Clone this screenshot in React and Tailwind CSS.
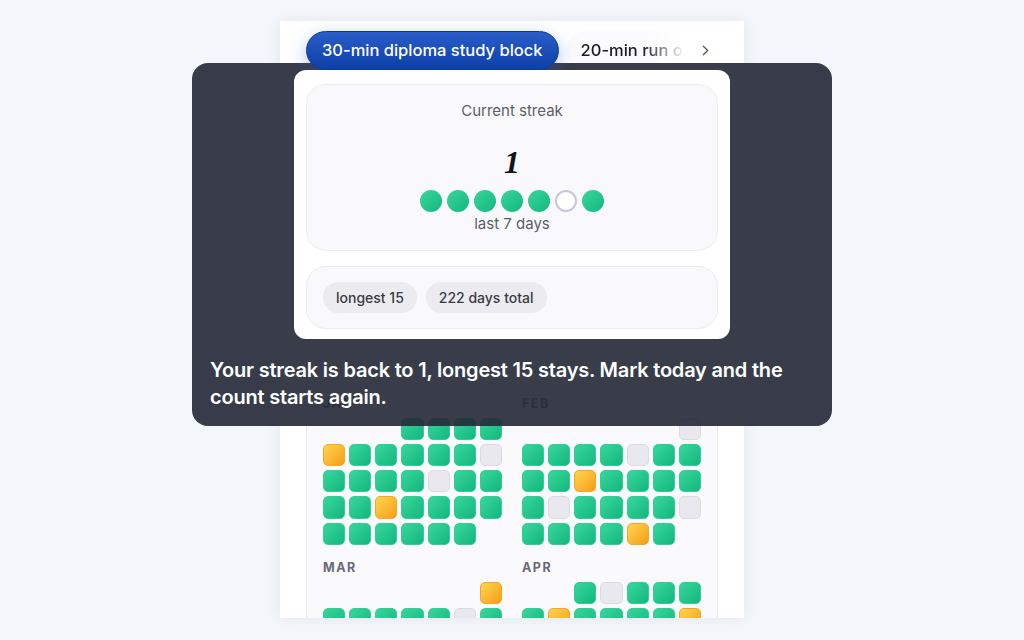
import React from "react";
import { ChevronRight } from "lucide-react";

const months = [
  { name: "JAN", rows: ["xxxGGGG", "OGGGGGE", "GGGGEGG", "GGOGGGG", "GGGGGG"] },
  { name: "FEB", rows: ["xxxxxxE", "GGGGEGG", "GGOGGGG", "GEGGGGE", "GGGGOG"] },
  { name: "MAR", rows: ["xxxxxxO", "GGGGGEG", "GGGGGGG", "GGOGGGG", "GGGGGGG", "GG"] },
  { name: "APR", rows: ["xxGEGGG", "GOGGGGO", "GGGGGGG", "GGEGGGG", "GGGG"] },
];

const week = ["G", "G", "G", "G", "G", "E", "G"];

const cellClass = {
  G: "bg-linear-to-br from-[#36d69c] to-[#10b77e] border border-[#2fd095]",
  O: "bg-linear-to-br from-[#fdd54f] to-[#f59e0b] border border-[#f5a623]",
  E: "bg-[#e9e8ee] border border-[#dcdbe4]",
  x: "",
};

const Month = ({ month }) => (
  <div>
    <p className="text-[12.5px] font-bold tracking-[0.12em] text-[#6a6977] leading-[14px] mb-[7px]">
      {month.name}
    </p>
    <div className="grid grid-cols-7 gap-[4px]">
      {month.rows.flatMap((row, r) =>
        row.split("").map((c, i) => (
          <div key={r + "-" + i} className={`aspect-square rounded-[5px] ${cellClass[c]}`} />
        ))
      )}
    </div>
  </div>
);

const App = () => {
  return (
    <div className="relative h-[640px] w-full overflow-hidden bg-[#f3f6fa] font-['Inter',sans-serif]">
      {/* phone column */}
      <div className="mx-auto mt-[21px] h-[597px] w-[464px] overflow-hidden bg-white px-[26px] shadow-[0_0_14px_rgba(20,30,60,0.07)]">
        {/* tabs */}
        <div className="flex items-center gap-[7px] pt-[10px]">
          <div className="relative z-30 flex h-[39px] shrink-0 items-center rounded-full border border-[#0b3a9e] bg-linear-to-b from-[#2a5dc8] to-[#0d3fa8] px-[15px] text-[16.5px] font-medium text-white shadow-[0_6px_18px_rgba(37,84,200,0.35)]">
            30-min diploma study block
          </div>
          <div className="flex h-[39px] w-[124px] shrink-0 items-center overflow-hidden rounded-full bg-[#fbfbfd] pl-[15px] text-[16.5px] font-medium whitespace-nowrap text-[#1c1c24] [mask-image:linear-gradient(to_right,black_62%,transparent_96%)]">
            20-min run or walk
          </div>
          <ChevronRight size={17} strokeWidth={1.8} className="shrink-0 text-[#55555f]" />
        </div>

        {/* spotlighted streak block */}
        <div className="relative z-30 mt-[14px]">
          <div className="absolute -inset-x-[12px] -top-[14px] -bottom-[10px] rounded-[12px] bg-white" />
          <div className="relative flex flex-col items-center rounded-[20px] border border-[#ececf1] bg-[#f9f9fb] pt-[16px] pb-[16px]">
            <p className="text-[15px] leading-5 text-[#5e5e6a]">Current streak</p>
            <p className="mt-[23px] font-['Liberation_Serif',serif] text-[32px] leading-[36px] font-bold italic text-[#141418]">
              1
            </p>
            <div className="mt-[10px] flex gap-[5px]">
              {week.map((d, i) =>
                d === "G" ? (
                  <div key={i} className="h-[22px] w-[22px] rounded-full bg-linear-to-br from-[#36d69c] to-[#10b77e]" />
                ) : (
                  <div key={i} className="h-[22px] w-[22px] rounded-full border-2 border-[#c9c6d7] bg-white" />
                )
              )}
            </div>
            <p className="mt-[2px] text-[15px] leading-5 text-[#5e5e6a]">last 7 days</p>
          </div>
          <div className="relative mt-[15px] flex gap-[9px] rounded-[20px] border border-[#ececf1] bg-[#f9f9fb] px-[16px] py-[15px]">
            <span className="flex h-[31px] items-center rounded-full bg-[#ececf0] px-[13px] text-[14px] font-medium text-[#3b3b45]">
              longest 15
            </span>
            <span className="flex h-[31px] items-center rounded-full bg-[#ececf0] px-[13px] text-[14px] font-medium text-[#3b3b45]">
              222 days total
            </span>
          </div>
        </div>

        {/* calendar */}
        <div className="mt-[20px] rounded-[20px] border border-[#ececf1] bg-[#fafafc] px-[16px] pt-[47px] pb-[20px]">
          <div className="grid grid-cols-2 gap-x-[20px] gap-y-[16px]">
            {months.map((m) => (
              <Month key={m.name} month={m} />
            ))}
          </div>
        </div>
      </div>

      {/* coach mark */}
      <div className="absolute top-[63px] left-[192px] z-20 flex h-[363px] w-[640px] flex-col justify-end rounded-[16px] bg-[#232836]/90 px-[18px] pb-[15px]">
        <p className="max-w-[590px] text-[20px] leading-[27px] font-semibold tracking-[-0.01em] text-white">
          Your streak is back to 1, longest 15 stays. Mark today and the count starts again.
        </p>
      </div>
    </div>
  );
};

export default App;
